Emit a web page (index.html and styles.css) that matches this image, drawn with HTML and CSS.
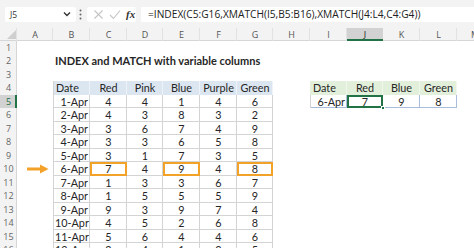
FILE: index.html
```html
<!DOCTYPE html>
<html lang="en">

<head>
    <meta charset="UTF-8">
    <title>INDEX and MATCH with variable columns</title>
    <link rel="stylesheet" href="styles.css">
</head>

<body>
    <!-- Formula bar -->
    <div class="formula-bar">
        <div class="name-box">
            <span>J5</span>
            <svg class="chevron" width="8" height="6" viewBox="0 0 8 6"><path d="M1 1.5 L4 4.5 L7 1.5" fill="none" stroke="#333" stroke-width="1.4"/></svg>
        </div>
        <svg class="grip" width="3" height="11" viewBox="0 0 3 11"><circle cx="1.5" cy="1.5" r="1" fill="#666"/><circle cx="1.5" cy="5.5" r="1" fill="#666"/><circle cx="1.5" cy="9.5" r="1" fill="#666"/></svg>
        <div class="fx-box">
            <svg width="11" height="11" viewBox="0 0 11 11"><path d="M1.5 1.5 L9.5 9.5 M9.5 1.5 L1.5 9.5" stroke="#c4c4c4" stroke-width="1.1"/></svg>
            <svg width="12" height="11" viewBox="0 0 12 11"><path d="M1 6 L4.5 9.5 L11 1.5" fill="none" stroke="#c4c4c4" stroke-width="1.1"/></svg>
            <span class="fx">fx</span>
        </div>
        <div class="formula">=INDEX(C5:G16,XMATCH(I5,B5:B16),XMATCH(J4:L4,C4:G4))</div>
    </div>

    <!-- Worksheet -->
    <table class="sheet">
        <colgroup>
            <col style="width:17px"><col style="width:36px"><col style="width:37px"><col style="width:37px">
            <col style="width:36px"><col style="width:37px"><col style="width:37px"><col style="width:36px">
            <col style="width:37px"><col style="width:37px"><col style="width:36px"><col style="width:37px">
            <col style="width:37px"><col style="width:36px">
        </colgroup>
        <thead>
            <tr>
                <th class="corner"><svg width="9" height="9" viewBox="0 0 9 9"><path d="M9 0 L9 9 L0 9 Z" fill="#cfcfcf"/></svg></th>
                <th>A</th><th>B</th><th>C</th><th>D</th><th>E</th><th>F</th><th>G</th>
                <th>H</th><th>I</th><th class="on">J</th><th>K</th><th>L</th><th>M</th>
            </tr>
        </thead>
        <tbody>
            <tr>
                <th class="rh">1</th><td></td><td></td><td></td><td></td><td></td><td></td><td></td><td></td><td></td><td></td><td></td><td></td><td></td>
            </tr>
            <tr>
                <th class="rh">2</th><td></td><td class="title" colspan="6">INDEX and MATCH with variable columns</td><td></td><td></td><td></td><td></td><td></td><td></td>
            </tr>
            <tr>
                <th class="rh">3</th><td></td><td></td><td></td><td></td><td></td><td></td><td></td><td></td><td></td><td></td><td></td><td></td><td></td>
            </tr>
            <tr>
                <th class="rh">4</th><td></td>
                <td class="hd first left">Date</td><td class="hd">Red</td><td class="hd">Pink</td><td class="hd">Blue</td><td class="hd">Purple</td><td class="hd">Green</td>
                <td></td>
                <td class="hd2 left">Date</td><td class="hd2">Red</td><td class="hd2">Blue</td><td class="hd2">Green</td>
                <td></td>
            </tr>
            <tr>
                <th class="rh on">5</th><td></td>
                <td class="c first right">1-Apr</td><td class="c">4</td><td class="c">4</td><td class="c">1</td><td class="c">4</td><td class="c">6</td>
                <td></td>
                <td class="r first right">6-Apr</td><td class="r sel">7</td><td class="r">9</td><td class="r last">8</td>
                <td></td>
            </tr>
            <tr>
                <th class="rh">6</th><td></td>
                <td class="c first right">2-Apr</td><td class="c">4</td><td class="c">3</td><td class="c">8</td><td class="c">3</td><td class="c">2</td>
                <td></td><td></td><td></td><td></td><td></td><td></td>
            </tr>
            <tr>
                <th class="rh">7</th><td></td>
                <td class="c first right">3-Apr</td><td class="c">3</td><td class="c">6</td><td class="c">7</td><td class="c">4</td><td class="c">9</td>
                <td></td><td></td><td></td><td></td><td></td><td></td>
            </tr>
            <tr>
                <th class="rh">8</th><td></td>
                <td class="c first right">4-Apr</td><td class="c">3</td><td class="c">3</td><td class="c">6</td><td class="c">5</td><td class="c">8</td>
                <td></td><td></td><td></td><td></td><td></td><td></td>
            </tr>
            <tr>
                <th class="rh">9</th><td></td>
                <td class="c first right">5-Apr</td><td class="c">3</td><td class="c">1</td><td class="c">7</td><td class="c">3</td><td class="c">5</td>
                <td></td><td></td><td></td><td></td><td></td><td></td>
            </tr>
            <tr>
                <th class="rh">10</th>
                <td><svg class="arrow" width="22" height="10" viewBox="0 0 22 10"><path d="M0 5 L15 5" stroke="#f2a129" stroke-width="3"/><path d="M13 0.5 L21.5 5 L13 9.5 Z" fill="#f2a129"/></svg></td>
                <td class="c first right">6-Apr</td><td class="c hl">7</td><td class="c">4</td><td class="c hl">9</td><td class="c">4</td><td class="c hl">8</td>
                <td></td><td></td><td></td><td></td><td></td><td></td>
            </tr>
            <tr>
                <th class="rh">11</th><td></td>
                <td class="c first right">7-Apr</td><td class="c">1</td><td class="c">3</td><td class="c">3</td><td class="c">6</td><td class="c">7</td>
                <td></td><td></td><td></td><td></td><td></td><td></td>
            </tr>
            <tr>
                <th class="rh">12</th><td></td>
                <td class="c first right">8-Apr</td><td class="c">1</td><td class="c">5</td><td class="c">5</td><td class="c">5</td><td class="c">9</td>
                <td></td><td></td><td></td><td></td><td></td><td></td>
            </tr>
            <tr>
                <th class="rh">13</th><td></td>
                <td class="c first right">9-Apr</td><td class="c">9</td><td class="c">3</td><td class="c">9</td><td class="c">7</td><td class="c">4</td>
                <td></td><td></td><td></td><td></td><td></td><td></td>
            </tr>
            <tr>
                <th class="rh">14</th><td></td>
                <td class="c first right">10-Apr</td><td class="c">4</td><td class="c">5</td><td class="c">2</td><td class="c">6</td><td class="c">8</td>
                <td></td><td></td><td></td><td></td><td></td><td></td>
            </tr>
            <tr>
                <th class="rh">15</th><td></td>
                <td class="c first right">11-Apr</td><td class="c">5</td><td class="c">6</td><td class="c">4</td><td class="c">4</td><td class="c">6</td>
                <td></td><td></td><td></td><td></td><td></td><td></td>
            </tr>
            <tr>
                <th class="rh">16</th><td></td>
                <td class="c first right">12-Apr</td><td class="c">2</td><td class="c">4</td><td class="c">1</td><td class="c">3</td><td class="c">5</td>
                <td></td><td></td><td></td><td></td><td></td><td></td>
            </tr>
        </tbody>
    </table>
</body>

</html>
```

FILE: styles.css
```css
body {
    margin: 0;
    width: 474px;
    height: 248px;
    overflow: hidden;
    background-color: #ffffff;
    font-family: Lato, "Open Sans", sans-serif;
    color: #262626;
}

/* formula bar */

.formula-bar {
    display: flex;
    align-items: center;
    height: 28px;
    padding-left: 5px;
    background-color: #f3f3f3;
}

.name-box {
    display: flex;
    align-items: center;
    justify-content: space-between;
    width: 71px;
    height: 15px;
    padding: 0 5px;
    box-sizing: border-box;
    background-color: #ffffff;
    border-radius: 2px;
    font-family: "Open Sans", sans-serif;
    font-size: 8.5px;
    color: #333;
}

.grip {
    margin: 0 5px 0 3px;
}

.fx-box {
    display: flex;
    align-items: center;
    gap: 5px;
    width: 49px;
    height: 15px;
    padding-left: 6px;
    box-sizing: border-box;
    background-color: #ffffff;
    border-radius: 2px;
}

.fx-box .fx {
    font-family: "Liberation Serif", serif;
    font-style: italic;
    font-weight: bold;
    font-size: 11px;
    color: #333;
}

.formula {
    flex: 1;
    height: 15px;
    margin-left: 5px;
    padding-left: 7px;
    background-color: #ffffff;
    font-family: "Open Sans", sans-serif;
    font-size: 10.2px;
    line-height: 15px;
    color: #222;
    white-space: nowrap;
}

/* worksheet grid */

.sheet {
    width: 493px;
    table-layout: fixed;
    border-collapse: separate;
    border-spacing: 0;
    font-size: 10.8px;
}

.sheet th,
.sheet td {
    padding: 0 2px;
    height: 13px;
    line-height: 12px;
    white-space: nowrap;
    font-weight: normal;
}

.sheet tbody tr:nth-child(even) th,
.sheet tbody tr:nth-child(even) td {
    height: 14px;
}

.sheet thead th {
    background-color: #f3f3f3;
    color: #555;
    font-family: "Open Sans", sans-serif;
    font-size: 9px;
    text-align: center;
    box-shadow: inset -1px 0 0 #e2e2e2, inset 0 -1px 0 #d6d6d6;
}

.sheet thead th.corner {
    padding: 0;
    text-align: right;
    vertical-align: bottom;
}

.sheet thead th.corner svg {
    display: block;
    margin: 0 1px 2px auto;
}

.sheet thead th.on {
    background-color: #d2d2d2;
    color: #222;
    box-shadow: inset 0 -2px 0 #217346;
}

.rh {
    padding: 0;
    background-color: #f3f3f3;
    color: #666;
    font-family: "Open Sans", sans-serif;
    font-size: 9px;
    text-align: center;
    box-shadow: inset -1px 0 0 #d6d6d6;
}

.sheet .rh {
    padding: 0;
}

.rh.on {
    background-color: #d2d2d2;
    color: #217346;
    box-shadow: inset -2px 0 0 #217346;
}

.title {
    font-weight: bold;
    font-size: 11px;
}

.sheet td.title {
    font-weight: bold;
    padding-left: 2px;
}

/* data tables */

.hd {
    background-color: #dce6f1;
    text-align: center;
    box-shadow: inset -1px 0 0 #eef3f9;
}

.hd2 {
    background-color: #e2efda;
    text-align: center;
    box-shadow: inset -1px 0 0 #f0f7ec;
}

.c,
.r {
    text-align: center;
    box-shadow: inset -1px -1px 0 #d4d4d4;
}

.r {
    box-shadow: inset -1px -1px 0 #a9bcdc;
}

.c.first,
.r.first {
    box-shadow: inset 1px 0 0 #d4d4d4, inset -1px -1px 0 #d4d4d4;
}

.r.first {
    box-shadow: inset 1px 0 0 #d4d4d4, inset -1px -1px 0 #a9bcdc;
}

.hd.first {
    box-shadow: inset 1px 0 0 #d4d4d4, inset -1px 0 0 #eef3f9;
}

.sheet .left {
    text-align: left;
    padding-left: 3px;
}

.sheet .right {
    text-align: right;
    padding-right: 2px;
}

.c.hl {
    box-shadow: inset 0 0 0 2px #f2a129;
}

.sel {
    position: relative;
    box-shadow: inset 0 0 0 2px #217346;
}

.sel::after {
    content: "";
    position: absolute;
    right: -2px;
    bottom: -2px;
    width: 4px;
    height: 4px;
    background-color: #217346;
    border: 1px solid #ffffff;
    box-sizing: border-box;
}

.arrow {
    display: block;
    margin-left: 8px;
}
```
